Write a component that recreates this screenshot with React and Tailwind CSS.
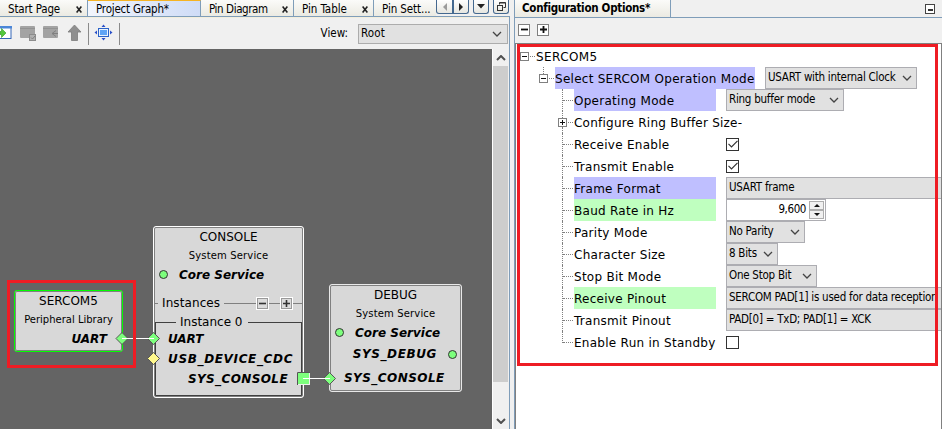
import React from "react";

const tahoma = "font-['DejaVu_Sans_Condensed','DejaVu_Sans',sans-serif] font-stretch-condensed tracking-[-0.25px]";
const verdana = "font-['DejaVu_Sans',sans-serif]";

function Chevron({ up = false, className = "" }) {
  return (
    <svg width="10" height="6" viewBox="0 0 10 6" className={`shrink-0 ${className}`}>
      <path d={up ? "M1 5 L5 1 L9 5" : "M1 1 L5 5 L9 1"} fill="none" stroke="currentColor" strokeWidth="1.3" />
    </svg>
  );
}

/* ---------- left panel: tabs and toolbar ---------- */

function Tab({ children, width, active, close }) {
  return (
    <div
      className={`flex h-4 shrink-0 items-start justify-between border-r border-[#7f9db9] pl-2 pr-[5px] ${width} ${
        active ? "border-t border-t-[#f5b324] bg-linear-to-r from-[#f2f5fc] to-[#cfdcf7] leading-4" : "bg-linear-to-b from-[#fbfbf9] to-[#ebeae2] leading-[18px]"
      }`}
    >
      {children}
      {close && (
        <svg width="6" height="7" viewBox="0 0 6 7" className="mt-[6px] shrink-0">
          <path d="M0.6 0.5 L5.4 6.5 M5.4 0.5 L0.6 6.5" stroke="#222" strokeWidth="1.6" />
        </svg>
      )}
    </div>
  );
}

function TabButton({ children, className }) {
  return (
    <div className={`flex h-[14px] items-center justify-center border border-t-0 border-[#44688f] bg-linear-to-b from-white to-[#e6e6e0] ${className}`}>
      {children}
    </div>
  );
}

function ToolbarIcons() {
  return (
    <svg width="125" height="31" viewBox="0 18 125 31" className="shrink-0">
      <rect x="-6" y="26.5" width="17" height="12" fill="#fff" stroke="#3467b8" />
      <rect x="-6" y="26" width="18" height="2.5" fill="#4a86d8" />
      <path d="M0 31.500h1.500v-3L6 33l-4.500 4.500v-3H0z" fill="#54c83c" stroke="#2f9a22" strokeWidth=".6" />
      <g fill="#a3a3a3">
        <rect x="20" y="26" width="15" height="12" rx="1" />
        <rect x="43" y="26" width="15" height="12" rx="1" />
      </g>
      <path d="M20 28.500H35M43 28.500H58" stroke="#929292" />
      <rect x="29.500" y="34.500" width="6" height="6" fill="#b0b0b0" stroke="#8c8c8c" />
      <path d="M31 37.500l1.500 1.500 2.500-3" fill="none" stroke="#808080" />
      <path d="M56 30.500l-4 3 4 3M52 33.500h6" fill="none" stroke="#808080" />
      <path d="M74.500 25L81 32h-3.500v8.500h-6V32H68z" fill="#8f8f8f" stroke="#7c7c7c" strokeWidth=".8" strokeLinejoin="round" />
      <path d="M88.500 23v22M119.500 23v22" stroke="#8a8a8a" />
      <rect x="98.500" y="28.500" width="10" height="8" fill="#e8f2ff" stroke="#2a62c8" />
      <rect x="100" y="30" width="7" height="5" fill="#5fa4f5" />
      <path d="M101.500 27L103.500 24.500L105.500 27zM101.500 38L103.500 40.500L105.500 38zM97 30.500L94.500 32.500L97 34.500zM110 30.500L112.500 32.500L110 34.500z" fill="#2a50c8" />
    </svg>
  );
}

function LeftHeader() {
  return (
    <div className={`flex h-4 items-start text-[11.500px] leading-[18px] whitespace-nowrap ${tahoma}`}>
      <Tab width="w-[88px]" close><span className="tracking-[-0.15px]">Start Page</span></Tab>
      <Tab width="w-[113px]" active><span className="tracking-[-0.2px]">Project Graph*</span></Tab>
      <Tab width="w-[93px]" close><span className="tracking-[-0.4px]">Pin Diagram</span></Tab>
      <Tab width="w-[80px]" close><span className="tracking-[-0.05px]">Pin Table</span></Tab>
      <div className="h-4 flex-1 bg-linear-to-b from-[#fbfbf9] to-[#ebeae2] pl-2 tracking-[-0.1px]">Pin Sett...</div>
      <TabButton className="w-[17px] rounded-bl-[3px] border-[#8fa5bd]">
        <svg width="6" height="8" viewBox="0 0 6 8"><path d="M5 0v8L1 4z" fill="#9b9b9b" /></svg>
      </TabButton>
      <TabButton className="w-4 rounded-br-[3px]">
        <svg width="6" height="8" viewBox="0 0 6 8"><path d="M1 0v8l4-4z" fill="#222" /></svg>
      </TabButton>
      <TabButton className="ml-1 w-4 rounded-b-[3px]">
        <svg width="8" height="5" viewBox="0 0 8 5"><path d="M0 0h8L4 4.500z" fill="#222" /></svg>
      </TabButton>
      <TabButton className="ml-1 w-4 rounded-b-[3px]">
        <svg width="9" height="9" viewBox="0 0 9 9" fill="none" stroke="#333">
          <path d="M2.500 2.500v-2h6v5h-2M2.500 1h6" />
          <rect x=".5" y="3.500" width="5" height="5" />
        </svg>
      </TabButton>
      <div className="w-px" />
    </div>
  );
}

function Toolbar() {
  return (
    <div className={`flex h-8 items-center border-t border-[#f3eedc] bg-[#f0f0f0] text-[11.500px] ${tahoma}`}>
      <ToolbarIcons />
      <span className="ml-auto tracking-normal">View:</span>
      <div className="ml-[10px] mr-px flex h-5 w-[150px] items-center justify-between border border-[#acacac] bg-[#e1e1e1] pl-[2px] pr-[5px] tracking-[0.1px]">
        Root
        <Chevron className="text-[#444]" />
      </div>
    </div>
  );
}

/* ---------- graph canvas ---------- */

const port = "text-[12px] font-bold italic";

function NodeHead({ title, subtitle, subtitleTracking = "" }) {
  return (
    <>
      <div className="flex h-5 items-center justify-center text-[12px]">{title}</div>
      <div className={`flex h-[18px] items-center justify-center text-[10px] ${subtitleTracking}`}>{subtitle}</div>
    </>
  );
}

function Dot({ className = "" }) {
  return <span className={`size-[9px] shrink-0 rounded-full border border-[#333] bg-[#7dff7d] ${className}`} />;
}

function MiniButton({ plus }) {
  return (
    <span className="flex size-[13px] shrink-0 items-center justify-center border border-white bg-[#dcdcdc] outline -outline-offset-2 outline-[#999]">
      <svg width="7" height="7" viewBox="0 0 7 7" stroke="#333" strokeWidth="1.6">
        <path d={plus ? "M0 3.500h7M3.500 0v7" : "M0 3.500h7"} />
      </svg>
    </span>
  );
}

function Graph() {
  return (
    <div className={`relative h-[380px] w-[492px] shrink-0 overflow-hidden bg-[#646464] leading-none whitespace-nowrap text-black ${verdana}`}>
      {/* SERCOM5 */}
      <div className="absolute top-[241px] left-[14px] h-[62px] w-[109px] rounded-[3px] border border-[#00ff00] bg-[#d8d8d8] outline -outline-offset-2 outline-[#808080]">
        <NodeHead title="SERCOM5" subtitle="Peripheral Library" />
        <div className={`flex h-5 items-center justify-end pr-[15px] ${port}`}>UART</div>
      </div>

      {/* CONSOLE */}
      <div className="absolute top-[177px] left-[153px] h-[172px] w-[151px] rounded-[3px] border border-white bg-[#d8d8d8] outline -outline-offset-2 outline-[#808080]">
        <NodeHead title="CONSOLE" subtitle="System Service" subtitleTracking="tracking-[0.15px]" />
        <div className={`flex h-[19px] items-center pl-[5px] ${port}`}>
          <Dot />
          <span className="ml-[11px]">Core Service</span>
        </div>
        <div className="mt-[9px] flex h-5 items-center text-[12px]">
          <span className="h-px w-1 bg-[#808080]" />
          <span className="ml-1 tracking-[0.1px]">Instances</span>
          <span className="ml-1 h-px flex-1 bg-[#808080]" />
          <MiniButton />
          <span className="h-px w-[11px] bg-[#808080]" />
          <MiniButton plus />
          <span className="h-px w-[10px] bg-[#808080]" />
        </div>
        <div className="mx-px mt-[9px] h-[74px] border border-t-0 border-[#404040]">
          <div className="flex h-3 -translate-y-[6px] items-center text-[12px]">
            <span className="h-px w-5 bg-[#404040]" />
            <span className="ml-[4px]">Instance 0</span>
            <span className="ml-[5px] h-px flex-1 bg-[#404040]" />
          </div>
          <div className={`-mt-[5px] ${port}`}>
            <div className="flex h-5 items-center pl-3">UART</div>
            <div className="flex h-5 items-center pl-3 tracking-[0.65px]">USB_DEVICE_CDC</div>
            <div className="flex h-5 items-center justify-end pr-[13px] tracking-[0.4px]">SYS_CONSOLE</div>
          </div>
        </div>
      </div>

      {/* DEBUG */}
      <div className="absolute top-[235px] left-[329px] h-[108px] w-[133px] rounded-[3px] border border-[#e8e8e8] bg-[#d8d8d8] outline -outline-offset-2 outline-[#808080]">
        <NodeHead title="DEBUG" subtitle="System Service" subtitleTracking="tracking-[0.15px]" />
        <div className={port}>
          <div className="flex h-[19px] items-center pl-[5px]">
            <Dot />
            <span className="ml-[11px]">Core Service</span>
          </div>
          <div className="flex h-6 items-center justify-end pr-1">
            <span className="tracking-[0.6px]">SYS_DEBUG</span>
            <Dot className="ml-[11px]" />
          </div>
          <div className="flex h-6 items-center pl-[14px] tracking-[0.45px]">SYS_CONSOLE</div>
        </div>
      </div>

      {/* connections and ports */}
      <svg className="absolute inset-0" width="492" height="380" viewBox="0 49 492 380">
        <g stroke="#555" strokeWidth="1">
          <path d="M122 332.500L128 338.500L122 344.500L116 338.500Z" fill="#7dff7d" />
          <path d="M153.500 332.500L159.500 338.500L153.500 344.500L147.500 338.500Z" fill="#7dff7d" />
          <path d="M153.500 352.500L159.500 358.500L153.500 364.500L147.500 358.500Z" fill="#fff88c" />
          <rect x="297.500" y="372.500" width="12" height="12" fill="#7dff7d" stroke="#eee" />
          <path d="M297.500 385V372.500H310" fill="none" />
          <path d="M329.500 372.500L335.500 378.500L329.500 384.500L323.500 378.500Z" fill="#7dff7d" />
        </g>
        <path d="M122 338.500H154M303 378.500H330" stroke="#fff" />
      </svg>

      {/* highlight */}
      <div className="absolute top-[231px] left-[7px] h-[88px] w-[129px] border-3 border-[#ee1c24]" />
    </div>
  );
}

function Scrollbar() {
  return (
    <div className="flex flex-1 flex-col items-center border-l border-white bg-[#f0f0f0] text-[#505050]">
      <div className="flex h-[17px] items-center"><Chevron up className="[&_path]:stroke-2" /></div>
      <div className="h-[316px] w-[15px] self-start bg-[#cdcdcd]" />
      <div className="mt-auto flex h-[17px] items-center"><Chevron className="[&_path]:stroke-2" /></div>
    </div>
  );
}

/* ---------- right panel: option tree ---------- */

function Toggle({ plus, big }) {
  return (
    <span className={`flex shrink-0 items-center justify-center border border-[#808080] bg-white ${big ? "size-3" : "size-[9px]"}`}>
      <svg width={big ? 7 : 5} height={big ? 7 : 5} viewBox="0 0 7 7" stroke="#111" strokeWidth={big ? 1.8 : 1.4}>
        <path d={plus ? "M0 3.500h7M3.500 0v7" : "M0 3.500h7"} />
      </svg>
    </span>
  );
}

function Combo({ children, width }) {
  return (
    <div className={`flex h-[22px] shrink-0 items-center justify-between border border-[#adadb2] bg-[#e1e1e1] pl-[2px] pr-[4px] text-[11.500px] ${tahoma} ${width}`}>
      {children}
      <Chevron className="text-[#444]" />
    </div>
  );
}

function Wide({ children }) {
  return (
    <div className={`flex h-[22px] min-w-0 flex-1 items-center border border-r-0 border-[#adadb2] bg-[#e1e1e1] pl-[2px] text-[11.500px] ${tahoma}`}>
      {children}
    </div>
  );
}

function Check({ on }) {
  return (
    <span className="flex size-[13px] items-center justify-center border border-[#333] bg-white">
      {on && (
        <svg width="10" height="8" viewBox="0 0 10 8"><path d="M.5 3.800L3.500 6.800L9.500 .8" fill="none" stroke="#333" strokeWidth="1.200" /></svg>
      )}
    </span>
  );
}

function Spinner() {
  return (
    <div className={`flex h-[22px] w-[100px] items-center justify-end border border-[#adadb2] bg-white pr-px text-[11.500px] ${tahoma}`}>
      <span className="tracking-[-0.4px]">9,600</span>
      <div className="ml-[3px] flex flex-col">
        {["M3 0L6 3H0z", "M0 0H6L3 3z"].map((d) => (
          <span key={d} className="flex h-[9px] w-[15px] items-center justify-center border border-[#adadad] bg-[#f0f0f0]">
            <svg width="6" height="3" viewBox="0 0 6 3"><path d={d} fill="#111" /></svg>
          </span>
        ))}
      </div>
    </div>
  );
}

function Leaf({ label, tint = "", last, children }) {
  return (
    <div className="flex h-[22px] items-center pl-[46px]">
      <div className="h-full w-3 shrink-0">
        <div className={`border-l border-dotted border-[#808080] pt-[11px] ${last ? "h-3" : "h-full"}`}>
          <div className="w-[10px] border-t border-dotted border-[#808080]" />
        </div>
      </div>
      <div className={`flex h-full w-[142px] shrink-0 items-center pt-px tracking-[0.27px] ${tint}`}>{label}</div>
      <div className="ml-[10px] flex min-w-0 flex-1 items-center">{children}</div>
    </div>
  );
}

const blue = "bg-[#bfbfff]";
const green = "bg-[#bfffbf]";

function OptionTree() {
  return (
    <div className={`relative flex-1 border-t border-r border-l border-[#808080] bg-white pt-px text-[12px] whitespace-nowrap text-black ${verdana}`}>
      <div className="flex h-[22px] items-center pl-1">
        <Toggle />
        <span className="ml-px w-[5px] border-t border-dotted border-[#808080]" />
        <span className="ml-px pt-px tracking-[0.4px]">SERCOM5</span>
      </div>
      <div className="flex h-[22px] items-center pl-[23px]">
        <div className="flex h-full flex-col items-center">
          <span className="h-[7px] border-l border-dotted border-[#808080]" />
          <Toggle />
        </div>
        <span className="ml-px w-[5px] border-t border-dotted border-[#808080]" />
        <span className={`ml-px flex h-full w-[200px] shrink-0 items-center pt-px tracking-[0.27px] ${blue}`}>Select SERCOM Operation Mode</span>
        <div className="ml-[10px]"><Combo width="w-[152px]">USART with internal Clock</Combo></div>
      </div>
      <Leaf label="Operating Mode" tint={blue}><Combo width="w-[118px]">Ring buffer mode</Combo></Leaf>
      <div className="flex h-[22px] items-center pl-[42px]">
        <div className="flex h-full flex-col items-center">
          <span className="h-[7px] border-l border-dotted border-[#808080]" />
          <Toggle plus />
          <span className="flex-1 border-l border-dotted border-[#808080]" />
        </div>
        <span className="ml-px w-[5px] border-t border-dotted border-[#808080]" />
        <span className="ml-px pt-px tracking-[0.23px]">Configure Ring Buffer Size-</span>
      </div>
      <Leaf label="Receive Enable"><Check on /></Leaf>
      <Leaf label="Transmit Enable"><Check on /></Leaf>
      <Leaf label="Frame Format" tint={blue}><Wide>USART frame</Wide></Leaf>
      <Leaf label="Baud Rate in Hz" tint={green}><Spinner /></Leaf>
      <Leaf label="Parity Mode"><Combo width="w-[79px]">No Parity</Combo></Leaf>
      <Leaf label="Character Size"><Combo width="w-[52px]">8 Bits</Combo></Leaf>
      <Leaf label="Stop Bit Mode"><Combo width="w-[91px]">One Stop Bit</Combo></Leaf>
      <Leaf label="Receive Pinout" tint={green}><Wide>SERCOM PAD[1] is used for data reception</Wide></Leaf>
      <Leaf label="Transmit Pinout"><Wide>PAD[0] = TxD; PAD[1] = XCK</Wide></Leaf>
      <Leaf label="Enable Run in Standby" last><Check /></Leaf>

      {/* highlight */}
      <div className="pointer-events-none absolute top-0 left-px h-[322px] w-[421px] border-3 border-[#ee1c24]" />
    </div>
  );
}

export default function App() {
  return (
    <div className="flex h-[429px] w-[942px] overflow-hidden bg-[#f0f0f0] text-black">
      <div className="flex w-[510px] shrink-0 flex-col">
        <LeftHeader />
        <div className="flex flex-1 flex-col border-t border-r border-[#7f9db9]">
          <Toolbar />
          <div className="flex flex-1">
            <Graph />
            <Scrollbar />
          </div>
        </div>
      </div>
      <div className="ml-1 flex min-w-0 flex-1 flex-col border-l border-[#7f9db9]">
        <div className="flex h-[17px] items-center justify-between pr-[7px]">
          <div className={`h-[17px] w-[156px] border-r border-[#7f9db9] bg-linear-to-b from-[#fbfbf9] to-[#ebeae2] pl-[7px] text-[11.500px] leading-4 font-bold whitespace-nowrap ${tahoma}`}>
            <span className="tracking-[-0.28px]">Configuration Options*</span>
          </div>
          <span className="flex h-[10px] w-[10px] items-end justify-center border border-[#444] bg-white pb-[2px]">
            <span className="h-[2px] w-[5px] bg-[#333]" />
          </span>
        </div>
        <div className="flex h-[26px] items-center gap-[7px] border-t border-[#7f9db9] pl-[3px] pb-[2px]">
          <Toggle big />
          <Toggle big plus />
        </div>
        <OptionTree />
      </div>
    </div>
  );
}
